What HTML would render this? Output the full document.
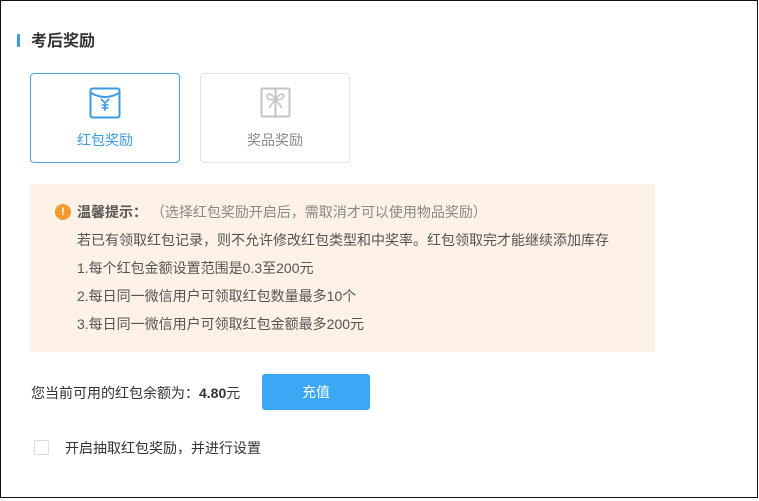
<!DOCTYPE html>
<html><head><meta charset="utf-8"><style>
*{margin:0;padding:0;box-sizing:border-box}
body{width:759px;height:501px;background:#fff;font-family:"Liberation Sans","Noto Sans CJK SC",sans-serif;position:relative;overflow:hidden}
.frame{position:absolute;left:0;top:0;width:758px;height:498px;border:1px solid #111}
.a{position:absolute;white-space:nowrap}
.card{position:absolute;top:73px;width:150px;height:90px;border:1px solid #e4e4e4;border-radius:4px}
.notice{position:absolute;left:30px;top:184px;width:625px;height:168px;background:#fef1e5}
.ln{position:absolute;left:77px;font-size:14px;color:#555;line-height:16px}
</style></head><body>
<div class="frame"></div>
<div class="a" style="left:17px;top:34px;width:3px;height:13px;background:#3a9be0;border-radius:1px"></div>
<div class="a" style="left:31px;top:32px;font-size:16px;font-weight:bold;color:#333;line-height:20px">考后奖励</div>
<div class="card" style="left:30px;border-color:#4aa3dc"></div>
<svg class="a" style="left:89px;top:87px" width="32" height="32" viewBox="0 0 32 32" fill="none" stroke="#3a9be0" stroke-width="2">
<rect x="1.5" y="1.5" width="29" height="29" rx="2"/>
<path d="M2 6 Q16 14 30 6"/>
<path d="M12 12 L16 16 L20 12 M16 16 V24 M12.5 18 H19.5 M12.5 21 H19.5" stroke-width="1.6"/>
</svg>
<div class="a" style="left:30px;top:131px;width:150px;text-align:center;font-size:14px;color:#3a9be0;line-height:18px">红包奖励</div>
<div class="card" style="left:200px"></div>
<svg class="a" style="left:260px;top:87px" width="31" height="31" viewBox="0 0 31 31" fill="none" stroke="#c4c4c4" stroke-width="2">
<rect x="1.5" y="1.5" width="28" height="28" rx="1"/>
<path d="M15.5 2 V29"/>
<path d="M15.5 12 Q9 4 7 9 Q7 14 15.5 12 Q22 14 24 9 Q22 4 15.5 12 L9 21 M15.5 12 L22 21" stroke-width="1.5"/>
</svg>
<div class="a" style="left:200px;top:131px;width:150px;text-align:center;font-size:14px;color:#888;line-height:18px">奖品奖励</div>
<div class="notice"></div>
<div class="a" style="left:55px;top:204px;width:16px;height:16px;border-radius:50%;background:#f39a2b;color:#fff;font-size:11px;font-weight:bold;text-align:center;line-height:16px">!</div>
<div class="ln" style="top:204px"><b style="color:#555">温馨提示：</b><span style="color:#888"> （选择红包奖励开启后，需取消才可以使用物品奖励）</span></div>
<div class="ln" style="top:232px">若已有领取红包记录，则不允许修改红包类型和中奖率。红包领取完才能继续添加库存</div>
<div class="ln" style="top:260px">1.每个红包金额设置范围是0.3至200元</div>
<div class="ln" style="top:288px">2.每日同一微信用户可领取红包数量最多10个</div>
<div class="ln" style="top:316px">3.每日同一微信用户可领取红包金额最多200元</div>
<div class="a" style="left:31px;top:385px;font-size:14px;color:#333;line-height:16px">您当前可用的红包余额为：<b>4.80</b>元</div>
<div class="a" style="left:262px;top:374px;width:108px;height:36px;background:#3aa8f5;border-radius:3px;color:#fff;font-size:14px;text-align:center;line-height:36px">充值</div>
<div class="a" style="left:34px;top:440px;width:15px;height:15px;border:1px solid #ddd;border-radius:2px"></div>
<div class="a" style="left:65px;top:440px;font-size:14px;color:#333;line-height:16px">开启抽取红包奖励，并进行设置</div>
</body></html>
